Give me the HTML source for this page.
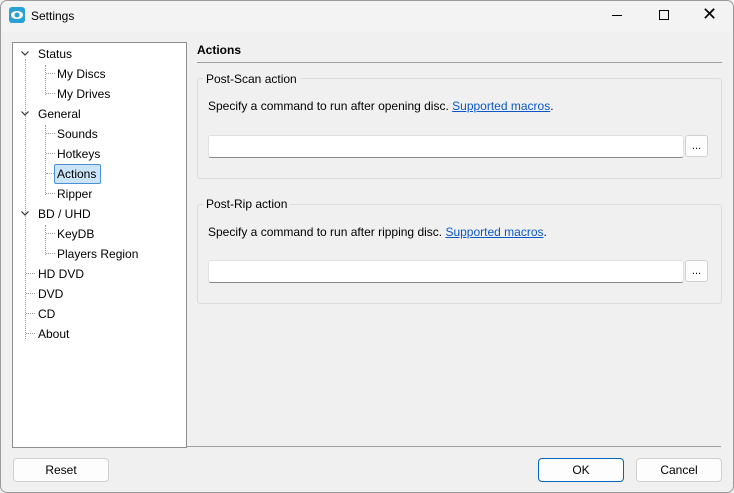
<!DOCTYPE html>
<html><head><style>
*{box-sizing:border-box;margin:0;padding:0}
body{width:734px;height:493px;background:#f0f0f0;font-family:"Liberation Sans",sans-serif;font-size:12px;color:#000;position:relative;overflow:hidden}
.win{position:absolute;left:0;top:0;width:734px;height:493px;border:1px solid #9a9a9a;border-radius:7px;background:#f0f0f0}
.title{position:absolute;left:0;top:0;width:732px;height:31px;background:#f3f3f3;border-radius:7px 7px 0 0}
.a{position:absolute;white-space:nowrap}
.tree{position:absolute;left:12px;top:42px;width:175px;height:406px;background:#fff;border:1px solid #8f8f8f}
.dv{position:absolute;border-left:1px dotted #999;width:0}
.dh{position:absolute;border-top:1px dotted #999;height:0}
.grp{position:absolute;left:197px;width:525px;border:1px solid #dcdcdc;border-radius:3px}
.lbl{position:absolute;background:#f0f0f0;padding:0 3px}
.inp{position:absolute;left:208px;width:476px;height:23px;background:#fff;border:1px solid #e0e0e0;border-bottom:1px solid #888;border-radius:3px}
.dot{position:absolute;left:685px;width:23px;height:22px;background:#fdfdfd;border:1px solid #d0d0d0;border-radius:3px;text-align:center;font-size:11px;line-height:20px}
.btn{position:absolute;top:458px;height:24px;background:#fdfdfd;border:1px solid #d0d0d0;border-radius:4px;text-align:center;line-height:22px}
a{color:#0b57c9}
.t{position:absolute;white-space:nowrap;margin-top:1px}
</style></head><body>
<div class="win">
<div class="title"></div>
</div>
<svg class="a" style="left:9px;top:7px" width="16" height="16"><rect width="16" height="16" rx="3" fill="#2a9fd8"/><ellipse cx="8" cy="8" rx="6" ry="4" fill="#fff"/><circle cx="8" cy="8" r="2.5" fill="#2a9fd8"/></svg>
<div class="t" style="left:31px;top:8px">Settings</div>
<div class="a" style="left:612px;top:15px;width:10px;border-top:1px solid #000"></div>
<div class="a" style="left:659px;top:10px;width:10px;height:10px;border:1px solid #000"></div>
<div class="a" style="left:702px;top:4px;font-size:18px;font-weight:300">✕</div>

<div class="tree">
<div class="dv" style="left:12px;top:16px;height:280px"></div>
<div class="dv" style="left:32px;top:22px;height:30px"></div>
<div class="dv" style="left:32px;top:82px;height:70px"></div>
<div class="dv" style="left:32px;top:182px;height:30px"></div>
</div>
<svg class="a" style="left:20px;top:50px" width="12" height="8"><path d="M1.5 1.5 L5 5 L8.5 1.5" fill="none" stroke="#333" stroke-width="1.2"/></svg>
<svg class="a" style="left:20px;top:110px" width="12" height="8"><path d="M1.5 1.5 L5 5 L8.5 1.5" fill="none" stroke="#333" stroke-width="1.2"/></svg>
<svg class="a" style="left:20px;top:210px" width="12" height="8"><path d="M1.5 1.5 L5 5 L8.5 1.5" fill="none" stroke="#333" stroke-width="1.2"/></svg>
<div class="t" style="left:38px;top:46px">Status</div>
<div class="dh" style="left:46px;top:73px;width:9px"></div><div class="t" style="left:57px;top:66px">My Discs</div>
<div class="dh" style="left:46px;top:93px;width:9px"></div><div class="t" style="left:57px;top:86px">My Drives</div>
<div class="t" style="left:38px;top:106px">General</div>
<div class="dh" style="left:46px;top:133px;width:9px"></div><div class="t" style="left:57px;top:126px">Sounds</div>
<div class="dh" style="left:46px;top:153px;width:9px"></div><div class="t" style="left:57px;top:146px">Hotkeys</div>
<div class="dh" style="left:46px;top:173px;width:8px"></div><div class="a" style="left:54px;top:164px;width:47px;height:20px;background:#cce4f7;border:1px solid #4a90d9;border-radius:2px"></div><div class="t" style="left:57px;top:166px">Actions</div>
<div class="dh" style="left:46px;top:193px;width:9px"></div><div class="t" style="left:57px;top:186px">Ripper</div>
<div class="t" style="left:38px;top:206px">BD / UHD</div>
<div class="dh" style="left:46px;top:233px;width:9px"></div><div class="t" style="left:57px;top:226px">KeyDB</div>
<div class="dh" style="left:46px;top:253px;width:9px"></div><div class="t" style="left:57px;top:246px">Players Region</div>
<div class="dh" style="left:26px;top:273px;width:9px"></div><div class="t" style="left:38px;top:266px">HD DVD</div>
<div class="dh" style="left:26px;top:293px;width:9px"></div><div class="t" style="left:38px;top:286px">DVD</div>
<div class="dh" style="left:26px;top:313px;width:9px"></div><div class="t" style="left:38px;top:306px">CD</div>
<div class="dh" style="left:26px;top:333px;width:9px"></div><div class="t" style="left:38px;top:326px">About</div>

<div class="t" style="left:197px;top:42px;font-weight:bold">Actions</div>
<div class="a" style="left:197px;top:62px;width:525px;border-top:1px solid #a0a0a0"></div>

<div class="grp" style="top:78px;height:101px"></div>
<div class="lbl t" style="left:203px;top:71px">Post-Scan action</div>
<div class="t" style="left:208px;top:98px">Specify a command to run after opening disc. <a href="#">Supported macros</a>.</div>
<div class="inp" style="top:135px"></div>
<div class="dot" style="top:135px">...</div>

<div class="grp" style="top:204px;height:100px"></div>
<div class="lbl t" style="left:203px;top:196px">Post-Rip action</div>
<div class="t" style="left:208px;top:224px">Specify a command to run after ripping disc. <a href="#">Supported macros</a>.</div>
<div class="inp" style="top:260px"></div>
<div class="dot" style="top:260px">...</div>

<div class="a" style="left:187px;top:446px;width:534px;border-top:1px solid #a0a0a0"></div>
<div class="btn" style="left:13px;width:96px">Reset</div>
<div class="btn" style="left:538px;width:86px;border:1px solid #0067c0">OK</div>
<div class="btn" style="left:636px;width:86px">Cancel</div>
</body></html>
